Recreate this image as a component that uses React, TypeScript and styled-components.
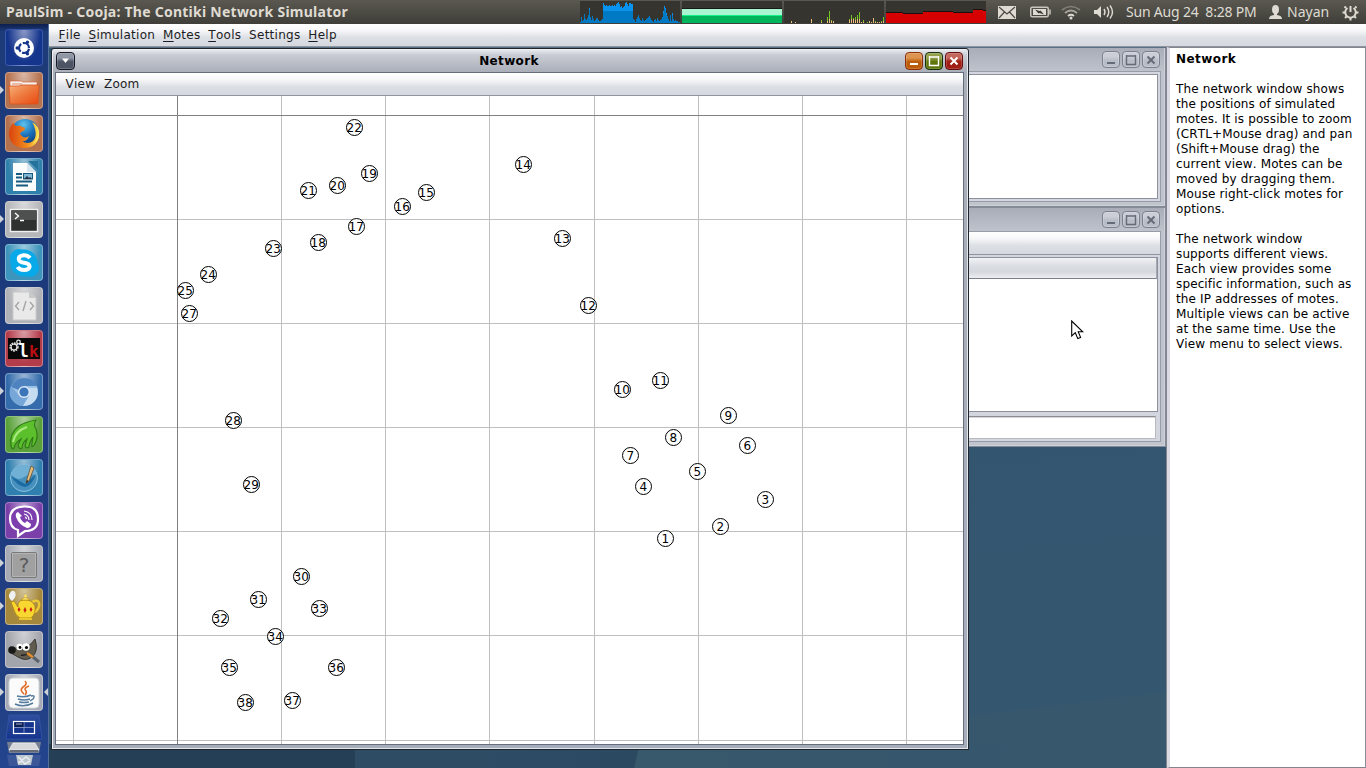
import React from "react";
import styled, { createGlobalStyle, css } from "styled-components";

const Global = createGlobalStyle`
  * { box-sizing: border-box; }
  html, body { margin: 0; padding: 0; }
  body { overflow: hidden; font-family: "DejaVu Sans", sans-serif; font-size: 12px; color: #000; }
  svg { display: block; }
`;

const Screen = styled.div`
  width: 1366px;
  height: 768px;
  display: flex;
  flex-direction: column;
  overflow: hidden;
`;

/* ---------- top panel ---------- */
const Panel = styled.header`
  height: 24px;
  flex: none;
  display: flex;
  align-items: center;
  background: linear-gradient(#5a5850, #3f3e39);
  color: #dfdbd2;
  font-family: "Noto Sans", "Open Sans", sans-serif;
  font-size: 14px;
  white-space: nowrap;
`;
const PanelTitle = styled.div`
  width: 580px;
  padding-left: 6px;
  font-weight: bold;
  font-size: 14px;
  line-height: 18px;
  padding-bottom: 1px;
  letter-spacing: 0.25px;
`;
const Graphs = styled.div`
  display: flex;
  gap: 2px;
  height: 24px;
  width: 406px;
`;
const PanelIcon = styled.div<{ $w: number; $ml: number }>`
  flex: none;
  width: ${(p) => p.$w}px;
  margin-left: ${(p) => p.$ml}px;
`;
const PanelText = styled.div<{ $w: number; $ml: number; $ls?: number }>`
  flex: none;
  width: ${(p) => p.$w}px;
  margin-left: ${(p) => p.$ml}px;
  line-height: 18px;
  padding-bottom: 1px;
  letter-spacing: ${(p) => p.$ls ?? 0}px;
`;

/* ---------- launcher ---------- */
const Body = styled.div`
  flex: 1;
  display: flex;
  min-height: 0;
`;
const Launcher = styled.nav`
  width: 49px;
  flex: none;
  display: flex;
  flex-direction: column;
  gap: 6px;
  padding: 5px 0 0 5px;
  background: linear-gradient(#0d1f4c 0, #1d3a79 7px, #1c3a7c 50%, #213f83 90%, #23458f);
  border-right: 1px solid #50709b;
`;
const Slot = styled.div`
  position: relative;
  width: 38px;
  height: 37px;
  flex: none;
`;
const Tile = styled.div<{ $c: string; $flat?: boolean }>`
  width: 38px;
  height: 37px;
  border-radius: 4px;
  border: 1px solid ${(p) => (p.$flat ? "rgba(120,150,230,.35)" : "rgba(255,255,255,.33)")};
  background: radial-gradient(ellipse at 50% 0, rgba(255, 255, 255, 0.5), rgba(255, 255, 255, 0) 65%), ${(p) => p.$c};
  overflow: hidden;
  svg { margin: -1px 0 0 -1px; }
`;
const Pip = styled.i<{ $right?: boolean }>`
  position: absolute;
  top: 14px;
  border: 4.5px solid transparent;
  ${(p) => p.$right
    ? css`right: -5px; border-left-width: 0; border-right-color: #cdd1d8;`
    : css`left: -5px; border-right-width: 0; border-left-color: #cdd1d8;`}
`;
const Folded = styled.div`
  width: 38px;
  height: 58px;
  margin-top: -3px;
`;

/* ---------- application ---------- */
const Workspace = styled.main`
  flex: 1;
  display: flex;
  flex-direction: column;
  min-width: 0;
  font-kerning: none;
`;
const MenuBar = styled.div<{ $h: number; $pl: number; $gap: number; $pb?: number }>`
  height: ${(p) => p.$h}px;
  flex: none;
  display: flex;
  align-items: center;
  gap: ${(p) => p.$gap}px;
  padding: 0 0 ${(p) => p.$pb ?? 0}px ${(p) => p.$pl}px;
  background: linear-gradient(#fff 0, #f7f7f9 30%, #dcdfe4 62%, #d5d8df);
  border-bottom: 1px solid #8f959f;
  color: #1c1c24;
  white-space: nowrap;
`;
const MenuItem = styled.span`
  line-height: 16px;
  font-size: 12px;
  letter-spacing: 0.28px;
  u { text-underline-offset: 2px; text-decoration-thickness: 1px; text-decoration-skip-ink: none; }
`;
const Row = styled.div`
  flex: 1;
  display: flex;
  min-height: 0;
`;
const Desktop = styled.div`
  position: relative;
  width: 1118px;
  flex: none;
  overflow: hidden;
  background:
    linear-gradient(90deg, #243f56 0 306px, transparent 306px) 0 100% / 100% 24px no-repeat,
    linear-gradient(102deg, #2e4d65 0 400px, #2c4962 577px, #38586b 578px, #35566d 920px, transparent 940px) 0 100% / 100% 24px no-repeat,
    linear-gradient(173deg, transparent 91%, rgba(56, 88, 107, 0.5) 91.2%),
    linear-gradient(175deg, #325571 50%, #35566f 75%),
    #325571;
  border-top: 1px solid #5c7084;
`;
const Win = styled.section<{ $x: number; $y: number; $w: number; $h: number; $active?: boolean }>`
  position: absolute;
  left: ${(p) => p.$x}px;
  top: ${(p) => p.$y}px;
  width: ${(p) => p.$w}px;
  height: ${(p) => p.$h}px;
  display: flex;
  flex-direction: column;
  ${(p) => p.$active
    ? css`
      padding: 0 4px 4px 3px;
      border: 1px solid #20242b;
      border-radius: 3px 3px 0 0;
      background: linear-gradient(#eceef1 0, #c9ccd4 6px, #a9aeb9 23px, #a7aebb);
      box-shadow: inset 1px 1px 0 #eef0f4, inset -1px -1px 0 #e2e5ea;
    `
    : css`
      padding: 0 4px 4px;
      border: 1px solid #858a97;
      border-width: 1px 1px 1px 0;
      background: linear-gradient(#a9adb7 0, #bfc3cc 24px, #c0c4cd);
      box-shadow: inset -1px -1px 0 #cdd0d8;
    `}
`;
const TitleBar = styled.div<{ $h: number; $pt: number }>`
  height: ${(p) => p.$h}px;
  flex: none;
  display: flex;
  align-items: flex-start;
  gap: 2px;
  padding: ${(p) => p.$pt}px 1px 0;
`;
const TitleText = styled.div`
  flex: 1;
  text-align: center;
  font-weight: bold;
  font-size: 12px;
  letter-spacing: 0.35px;
  line-height: 18px;
  padding-left: 38px;
`;
const Spacer = styled.div`
  flex: 1;
`;
const tones = {
  min: ["#dc9450", "#bd5c08", "#8d2d0a"],
  max: ["#93a04b", "#5e7509", "#17300b"],
  close: ["#c4675c", "#a01d14", "#640b0e"],
  menu: ["#8f96a4", "#4d5565", "#161a26"],
  off: ["#cbced6", "#b9bdc7", "#7b818e"],
};
const WinButton = styled.button<{ $tone: keyof typeof tones }>`
  width: ${(p) => (p.$tone === "menu" ? 19 : 18)}px;
  height: ${(p) => (p.$tone === "off" ? 17 : 18)}px;
  flex: none;
  padding: 0;
  border-radius: 4px;
  border: 1px solid ${(p) => tones[p.$tone][2]};
  background: linear-gradient(${(p) => tones[p.$tone][0]} 0, ${(p) => tones[p.$tone][0]} 30%, ${(p) => tones[p.$tone][1]} 55%, ${(p) => tones[p.$tone][1]});
  box-shadow: inset 0 0 0 1px rgba(255, 255, 255, 0.18);
`;
const Frame = styled.div<{ $dark?: boolean }>`
  flex: 1;
  min-height: 0;
  display: flex;
  flex-direction: column;
  background: ${(p) => (p.$dark ? "#fff" : "#d3d6de")};
  border: 1px solid ${(p) => (p.$dark ? "#666e7b" : "#979ca8")};
  ${(p) => !p.$dark && css`border-left: 0;`}
`;
const Pane = styled.div<{ $h?: number; $m: string }>`
  ${(p) => (p.$h ? css`height: ${p.$h}px; flex: none;` : css`flex: 1;`)}
  margin: ${(p) => p.$m};
  background: #fff;
  border: 1px solid #8b909c;
  border-left: 0;
`;
const Field = styled(Pane)`
  border-color: #8b8d92 #b8babd #b8babd;
  box-shadow: inset 0 1px 0 #d5d6d8;
`;
const TableHead = styled.div`
  height: 21px;
  background: linear-gradient(#f2f3f5, #dadde2 40%, #d5d8de 70%, #eceef1);
  border-bottom: 1px solid #7b808b;
  border-right: 1px solid #a5a9b2;
`;
const Help = styled.aside`
  flex: 1;
  padding: 4px 0 0 6px;
  border-top: 1px solid #82858d;
  border-left: 3px solid #d9dae2;
  border-right: 1px solid #8a8e98;
  border-bottom: 1px solid #82858d;
  box-shadow: -1px 0 0 #82858d;
  background: #fff;
  font-size: 12px;
  letter-spacing: 0.13px;
  line-height: 15px;
  white-space: pre;
  z-index: 1;
`;
const Strong = styled.div`
  font-weight: bold;
  letter-spacing: 0.45px;
  margin-bottom: 15px;
`;
const Para = styled.div`
  margin-bottom: 15px;
`;
const Pointer = styled.svg`
  position: absolute;
  left: 1022px;
  top: 272px;
`;

const motes: [number, number, number][] = [
  [1, 665, 538], [2, 720, 526], [3, 765, 499], [4, 643, 486], [5, 697, 471], [6, 747, 445],
  [7, 630, 455], [8, 673, 437], [9, 728, 415], [10, 622, 389], [11, 660, 380], [12, 588, 305],
  [13, 562, 238], [14, 523, 164], [15, 426, 192], [16, 402, 206], [17, 356, 226], [18, 318, 242],
  [19, 369, 173], [20, 337, 185], [21, 308, 190], [22, 354, 127], [23, 273, 248], [24, 208, 274],
  [25, 185, 290], [27, 189, 313], [28, 233, 420], [29, 251, 484], [30, 301, 576], [31, 258, 599],
  [32, 220, 618], [33, 319, 608], [34, 275, 636], [35, 229, 667], [36, 336, 667], [37, 292, 700],
  [38, 245, 702],
];
const vLines = [73, 281, 385, 489, 594, 698, 802, 906];
const hLines = [219, 323, 427, 531, 635, 740];

const NetworkMap = () => (
  <svg width="907" height="648" viewBox="56 96 907 648">
    <g shapeRendering="crispEdges" fill="#bfbfbf">
      {vLines.map((x) => <rect key={x} x={x} y="96" width="1" height="648" />)}
      {hLines.map((y) => <rect key={y} x="56" y={y} width="907" height="1" />)}
      <rect x="177" y="96" width="1" height="648" fill="#808080" />
      <rect x="56" y="115" width="907" height="1" fill="#808080" />
    </g>
    {motes.map(([id, x, y]) => (
      <g key={id}>
        <circle cx={x + 0.5} cy={y + 0.5} r="8" fill="#fff" stroke="#000" />
        <text x={x + 0.3} y={y + 5} fontSize="12" letterSpacing=".2" textAnchor="middle" fontFamily="DejaVu Sans">{id}</text>
      </g>
    ))}
  </svg>
);

const cpu = [1,6,2,3,9,4,3,5,8,15,6,3,7,4,2,3,5,5,3,2,2,3,4,20,18,17,18,17,17,18,17,17,18,17,18,17,19,20,21,19,16,17,15,16,17,20,21,19,17,20,20,19,19,4,3,1,4,6,8,5,3,2,5,3,2,3,4,5,6,7,5,3,2,1,3,4,2,5,3,2,3,4,6,12,17,15,10,7,4,2,8,2,10,4,2,3,2,2,1,1];
const net: [number, number, number][] = [[7,2,0],[11,1,0],[27,4,0],[37,3,2],[43,6,4],[45,12,8],[47,3,1],[49,2,0],[65,4,1],[67,8,4],[69,5,1],[71,6,3],[73,8,4],[75,11,7],[77,1,0],[79,3,2],[83,1,1],[85,2,0],[87,1,0],[89,5,0],[91,2,1],[93,1,0],[95,1,0],[97,2,1],[99,6,4]];

const LoadGraphs = () => (
  <Graphs>
    <svg width="100" height="24" shapeRendering="crispEdges">
      <rect width="100" height="22" y="1" fill="#35342f" />
      {cpu.map((v, i) => <rect key={i} x={i} y={23 - v} width="1" height={v} fill="#0079c5" />)}
      {cpu.map((v, i) => v > 9 && <rect key={i} x={i} y={23 - v} width="1" height={i > 22 && i < 54 ? v - 12 : 2} fill="#0a93ee" />)}
    </svg>
    <svg width="100" height="24" shapeRendering="crispEdges">
      <rect width="100" height="22" y="1" fill="#35342f" />
      <rect y="8" width="100" height="1" fill="#151a17" />
      <rect y="9" width="100" height="6" fill="#a9f5d1" />
      <rect y="15" width="100" height="1" fill="#12f08a" />
      <rect y="16" width="100" height="7" fill="#00b45c" />
    </svg>
    <svg width="100" height="24" shapeRendering="crispEdges">
      <rect width="100" height="22" y="1" fill="#35342f" />
      {net.map(([x, h, g]) => (
        <g key={x}>
          <rect x={x} y={23 - h} width="1" height={h} fill="#edbd7e" />
          <rect x={x} y={23 - h} width="1" height={g} fill="#73c51f" />
        </g>
      ))}
    </svg>
    <svg width="100" height="24" shapeRendering="crispEdges">
      <rect width="100" height="22" y="1" fill="#35342f" />
      <path d="M0 12H17V13H37V11H67V12H87V9H97V10H100V23H0Z" fill="#1c0f0d" />
      <path d="M0 13H17V14H37V12H67V13H87V10H97V11H100V23H0Z" fill="#d60000" />
    </svg>
  </Graphs>
);

const L = ({ children }: { children: React.ReactNode }) => (
  <svg width="38" height="37" viewBox="0 0 38 37">{children}</svg>
);

const icons: { name: string; c: string; flat?: boolean; left?: boolean; right?: boolean; art: React.ReactNode }[] = [
  { name: "dash", c: "#15348c", flat: true, art: <L>
    <circle cx="19" cy="19" r="10" fill="#fff" />
    <circle cx="19" cy="19" r="5" fill="none" stroke="#15348c" strokeWidth="2.2" strokeDasharray="8.8 1.67" strokeDashoffset="-0.8" />
    <circle cx="12.2" cy="19" r="1.7" fill="#15348c" /><circle cx="22.4" cy="13.2" r="1.7" fill="#15348c" /><circle cx="22.4" cy="24.8" r="1.7" fill="#15348c" /></L> },
  { name: "files", c: "#b5724f", left: true, art: <L>
    <defs><linearGradient id="fo" x2="1" y2="1"><stop stopColor="#f7b07a" /><stop offset=".45" stopColor="#ee7d42" /><stop offset="1" stopColor="#e9480f" /></linearGradient></defs>
    <path d="M5 11V9H16L18 10H32V16H5Z" fill="#f3f0ed" stroke="#d95c2e" strokeWidth=".6" /><path d="M7 12H17" stroke="#e8835c" />
    <path d="M4 14H14L17 13H34L33 31Q33 32 32 32H6Q5 32 5 31Z" fill="url(#fo)" stroke="#d9501c" strokeWidth=".8" /></L> },
  { name: "firefox", c: "#b4714d", art: <L>
    <defs><radialGradient id="gl" cx=".45" cy=".2" r=".8"><stop stopColor="#5cc3ee" /><stop offset=".5" stopColor="#1a6fb8" /><stop offset="1" stopColor="#0b2f72" /></radialGradient>
      <linearGradient id="fx" x2="1"><stop stopColor="#d9430e" /><stop offset=".6" stopColor="#f28c1d" /><stop offset="1" stopColor="#fbe04a" /></linearGradient></defs>
    <circle cx="20" cy="18" r="14" fill="url(#gl)" />
    <path d="M8 8L11 11Q15 10 17 12Q20 12 20 14Q19 16 16 17Q14 19 17 21Q20 24 24 21Q22 27 17 26Q23 30 28 26Q32 22 30 14Q29 10 27 7Q35 11 34 21Q32 33 19 33Q5 32 4 19Q4 13 8 8Z" fill="url(#fx)" />
    <path d="M28 8Q35 14 32 22Q30 28 26 30Q34 27 34 19Q34 11 28 8Z" fill="#ffe862" /></L> },
  { name: "writer", c: "#2f80ab", art: <L>
    <path d="M23 3H33V12Z" fill="#23739c" /><path d="M8 5H22L31 14V33H8Z" fill="#fbfcfc" /><path d="M22 5L31 14H22Z" fill="#d8e7ef" />
    <path d="M11 16H17M11 19.5H17M11 23.5H27M11 27.5H23" stroke="#175a80" strokeWidth="2" /><rect x="18.5" y="15.5" width="9" height="5.5" fill="#7fb8d5" stroke="#175a80" /><path d="M19 21L22 18L24 20L25 19L27 21Z" fill="#234" /></L> },
  { name: "terminal", c: "#b5b6ba", left: true, art: <L>
    <rect x="5.5" y="8.5" width="27" height="22" fill="#2f3130" stroke="#f1f1f1" strokeWidth="1.4" /><rect x="7" y="10" width="24" height="9" fill="#4d504e" /><path d="M10 12L13.5 15L10 18M15 19.5H19" fill="none" stroke="#fff" strokeWidth="1.3" /></L> },
  { name: "skype", c: "#3d94bc", art: <L>
    <circle cx="14" cy="14" r="9" fill="#08a9e8" /><circle cx="25" cy="24" r="9" fill="#08a9e8" /><circle cx="19" cy="19" r="13.5" fill="#08a9e8" />
    <path d="M25 14Q22.500 10.800 18.500 11.300Q13.500 12 13.800 15.200Q14.200 18 19 18.800Q24.800 19.800 24.600 22.700Q24 26 19 26Q14.500 26 12.500 23" fill="none" stroke="#fff" strokeWidth="4" /></L> },
  { name: "editor", c: "#b1b2b8", art: <L>
    <path d="M8 5H24L31 11V33H8Z" fill="#e9e9e9" stroke="#c9c9c9" /><path d="M24 5V11H31Z" fill="#c9c9c9" />
    <path d="M14 15L10.500 19L14 23M25 15L28.500 19L25 23M21 14L18 24" fill="none" stroke="#a5a5a5" strokeWidth="1.400" /></L> },
  { name: "luckybackup", c: "#b33c4b", art: <L>
    <rect x="3" y="8" width="32" height="21" fill="#080808" /><circle cx="9" cy="17" r="3.500" fill="none" stroke="#ddd" strokeWidth="2.400" strokeDasharray="1.600 .7" /><circle cx="9" cy="17" r="3" fill="none" stroke="#ddd" /><circle cx="13.500" cy="12" r="1.800" fill="none" stroke="#ddd" strokeWidth="1.300" />
    <text x="13.5" y="27" fontFamily="DejaVu Sans Mono" fontSize="17" fontWeight="bold" fill="#fff">l</text><text x="24" y="27" fontFamily="DejaVu Sans Mono" fontSize="16" fontWeight="bold" fill="#bd0d13">k</text></L> },
  { name: "chromium", c: "#356dac", left: true, art: <L>
    <circle cx="19" cy="19" r="14" fill="#9cc1e6" /><path d="M19 19L6 14Q10 5 19 5Q29 5 32 13H19Z" fill="#4e83bf" /><path d="M13.500 22L6 13Q2 23 9 29Q13 33 18 33L23 24Z" fill="#77a7d8" /><path d="M24 15H32Q35 27 24 32L18 33L24 23Z" fill="#c6dcf1" /><circle cx="19" cy="19" r="6" fill="#d9e8f6" /><circle cx="19" cy="19" r="4.600" fill="#3d76b8" /></L> },
  { name: "leaf", c: "#5aa13a", art: <L>
    <path d="M6 30Q4 17 14 10Q20 6 31 4Q28 9 31 13Q34 22 29 29Q26 33 27 27L28 21Q24 27 24 31Q21 33 20 30L22 23Q17 27 17 32Q14 34 13 29L16 23Q10 27 9 32Q7 34 6 30Z" fill="#5cc02d" stroke="#2f7c16" strokeWidth="1.200" /><path d="M8 26Q10 15 22 11" stroke="#a9e97f" strokeWidth="2" fill="none" /></L> },
  { name: "scribble", c: "#2f7faf", art: <L>
    <circle cx="19" cy="19" r="13.500" fill="#4790be" stroke="#8ec2de" /><path d="M6 15Q12 23 19 18Q26 13 32 17Q32 8 19 6Q8 7 6 15Z" fill="#6fb0d4" /><path d="M6 17L20 25L31 15Q27 27 20 28Q12 27 6 17Z" fill="#1b6ba2" />
    <path d="M26 7L29 9L24 22L21 24L22 20Z" fill="#e7bd7b" stroke="#5f4c35" strokeWidth=".8" /><path d="M21 24L22 21L23.500 22Z" fill="#222" /></L> },
  { name: "viber", c: "#7a3fa8", art: <L>
    <path d="M19 4.500Q33 4 33 17Q33 29 20 29L13 34V28Q5 26 5 16.500Q5 5 19 4.500Z" fill="#7d3fae" stroke="#fff" strokeWidth="2.200" />
    <path d="M13 10Q10 11 11 15Q14 23 22 26Q26 26 26 22L22 19L20 21Q16 19 15 15L17 14Z" fill="#fff" /><path d="M19 12Q24 13 24 18M19 9Q27 10 27 18M20 15Q21 15 21.500 17" fill="none" stroke="#fff" strokeWidth="1.200" /></L> },
  { name: "unknown", c: "#a8abb4", left: true, art: <L>
    <rect x="6.500" y="7.500" width="25" height="25" rx="1.500" fill="#a0a0a0" stroke="#787878" /><rect x="7.500" y="8.500" width="23" height="23" fill="none" stroke="#bbb" strokeWidth=".7" /><text x="19" y="27" textAnchor="middle" fontFamily="DejaVu Sans" fontSize="20" fill="#5c5c5c">?</text></L> },
  { name: "teapot", c: "#a5883b", left: true, art: <L>
    <path d="M7 13Q2 9 5 5Q7 1 10 4Q12 8 8 12Z" fill="#eef0f2" /><path d="M27 14Q35 10 34 18Q33 24 26 25" fill="none" stroke="#edc936" strokeWidth="2.500" />
    <path d="M6 14L9 13L13 19Q12 13 18 12Q27 11 30 18Q31 26 26 30H15Q10 27 9 22Z" fill="#f7d730" stroke="#af7e12" strokeWidth=".8" /><path d="M16 12Q20 7 25 12Z" fill="#ffe871" stroke="#b98c17" strokeWidth=".7" /><circle cx="20.500" cy="8" r="1.500" fill="#f9e05b" />
    <path d="M14 19L15.500 21.500L14 24L12.500 21.500ZM20 19L21.500 22L20 25L18.500 22ZM26 19L27.500 21.500L26 24L24.500 21.500Z" fill="#cd2418" /><path d="M14 31H27" stroke="#ecc630" strokeWidth="2" /></L> },
  { name: "gimp", c: "#a3a5ac", art: <L>
    <path d="M6 18Q12 18 13 14L16 17Q24 17 30 8Q34 20 27 26Q21 31 13 26L6 22Z" fill="#615c50" stroke="#37352f" /><circle cx="7" cy="19" r="3.800" fill="#181818" /><circle cx="14.500" cy="16" r="3.200" fill="#fff" /><circle cx="21" cy="16" r="3.700" fill="#fff" /><circle cx="15" cy="16.500" r="1.400" /><circle cx="21.500" cy="16.500" r="1.600" />
    <path d="M16 24Q20 25 24 22" stroke="#222" fill="none" strokeWidth="1.500" /><path d="M22 22L29 27" stroke="#e88e26" strokeWidth="2.200" /><path d="M28 26L34 31" stroke="#59616b" strokeWidth="3" /></L> },
  { name: "java", c: "#a5aab6", left: true, right: true, art: <L>
    <rect x="4" y="4" width="30" height="30" rx="4" fill="#fbfbfb" stroke="#d3d5d8" /><path d="M20 7Q23 10 18 13Q14 16 19 20M24 12Q18 14 21 17Q22 19 20 21" fill="none" stroke="#e46e2b" strokeWidth="1.700" />
    <path d="M12 22Q19 24 26 21M13 25Q19 27 25 25M14 28Q19 29 24 28M10 30Q19 34 28 29M26 22Q31 21 28 25L25 27" fill="none" stroke="#557b9c" strokeWidth="1.500" /></L> },
];

const FoldedIcons = () => (
  <svg width="38" height="58">
    <defs><linearGradient id="fd" x2="0" y2="1"><stop stopColor="#2f4e9d" /><stop offset="1" stopColor="#16348d" /></linearGradient></defs>
    <path d="M4 1H34L37 25H1Z" fill="url(#fd)" stroke="#3859a8" strokeWidth=".7" />
    <rect x="8.500" y="7.500" width="21" height="12" fill="#16348d" stroke="#fff" strokeWidth="1.200" /><path d="M19 8V19M9 13.500H29" stroke="#93a2cc" strokeWidth=".8" /><rect x="9.500" y="8.500" width="9" height="4.500" fill="#0d1f50" /><path d="M11 10H17" stroke="#cbd3ea" strokeWidth=".8" />
    <path d="M2 28H36L34 39H4Z" fill="#777f93" /><path d="M8 29H30L34 36H4Z" fill="#d5d7da" stroke="#f4f4f4" strokeWidth=".7" /><path d="M5 37H33" stroke="#646a78" strokeWidth="2" />
    <path d="M2 41H36L34 52H4Z" fill="#3b5797" /><path d="M11 41H28L26 51H13Z" fill="#bcc6ce" /><path d="M13 43L17 46L21 43L25 46M13 49L17 47L20 50L25 47" stroke="#e9edef" strokeWidth="1.500" fill="none" />
  </svg>
);

const Glyph = ({ kind, color }: { kind: "min" | "max" | "close" | "menu"; color: string }) => (
  <svg width="16" height="16" viewBox="0 0 16 16" fill="none" stroke={color} strokeWidth="2">
    {kind === "min" && <path d="M4 11H12" />}
    {kind === "max" && <path d="M3 4H13M3.500 3V12.500H12.500V3" strokeWidth="1.400" />}
    {kind === "close" && <path d="M4.500 4.500L11.500 11.500M11.500 4.500L4.500 11.500" />}
    {kind === "menu" && <path d="M5 5.500H12L8.500 10Z" fill={color} stroke="none" />}
  </svg>
);

const DimButtons = () => (
  <>
    {(["min", "max", "close"] as const).map((k) => (
      <WinButton key={k} $tone="off"><Glyph kind={k} color="#656b77" /></WinButton>
    ))}
  </>
);

export default function App() {
  return (
    <Screen>
      <Global />
      <Panel>
        <PanelTitle>PaulSim - Cooja: The Contiki Network Simulator</PanelTitle>
        <LoadGraphs />
        <PanelIcon $w={18} $ml={12}>
          <svg width="18" height="13"><rect width="18" height="13" fill="#dfdbd2" /><path d="M1 1L9 8L17 1M1 12L6.500 6M17 12L11.500 6" fill="none" stroke="#4b4943" strokeWidth="1.200" /></svg>
        </PanelIcon>
        <PanelIcon $w={21} $ml={14}>
          <svg width="21" height="12"><rect x=".75" y="1.250" width="17.500" height="9.500" rx="1.500" fill="none" stroke="#c9c5bd" strokeWidth="1.500" /><rect x="3" y="3" width="13" height="6" fill="#dfdbd2" /><rect x="19" y="3.500" width="2" height="5" fill="#aaa79f" /><path d="M5 3.500L9.500 5L10.500 4.500L14 8.500L9.500 7L8.500 7.500Z" fill="#3a3934" /></svg>
        </PanelIcon>
        <PanelIcon $w={20} $ml={10}>
          <svg width="20" height="16" fill="none" strokeWidth="1.700"><path d="M1 6Q10 -1 19 6" stroke="#817f77" /><path d="M4 9Q10 4 16 9" stroke="#aaa79f" /><path d="M7 12Q10 9.500 13 12" stroke="#dfdbd2" /><circle cx="10" cy="14" r="1.500" fill="#dfdbd2" /></svg>
        </PanelIcon>
        <PanelIcon $w={20} $ml={13}>
          <svg width="20" height="16" fill="none" stroke="#dfdbd2" strokeWidth="1.400"><path d="M0 6H3L7 2V14L3 10H0Z" fill="#dfdbd2" stroke="none" /><path d="M10 5Q12 8 10 11M13 3Q16.500 8 13 13" /><path d="M16 1.500Q21 8 16 14.500" /></svg>
        </PanelIcon>
        <PanelText $w={131} $ml={12} $ls={-0.2}>Sun Aug 24&nbsp; 8:28 PM</PanelText>
        <PanelIcon $w={13} $ml={12}>
          <svg width="13" height="15" fill="#dfdbd2"><ellipse cx="6.500" cy="4.500" rx="3.500" ry="4.500" /><path d="M5 8H8V10Q13 10.500 13 14H0Q0 10.500 5 10Z" /></svg>
        </PanelIcon>
        <PanelText $w={45} $ml={5}>Nayan</PanelText>
        <PanelIcon $w={17} $ml={10}>
          <svg width="17" height="17" fill="none" stroke="#dfdbd2"><path d="M5.500 4A5.300 5.300 0 1 0 11.500 4" strokeWidth="2" /><path d="M8.500 2V8" strokeWidth="2" /><path d="M4 4L2.500 2.500M13 4L14.500 2.500M3 8.500H.5M14 8.500H16.500M4.500 12.500L3 14M12.500 12.500L14 14M8.500 14V16.500" strokeWidth="2" /></svg>
        </PanelIcon>
      </Panel>
      <Body>
        <Launcher>
          {icons.map((i) => (
            <Slot key={i.name}>
              <Tile $c={i.c} $flat={i.flat}>{i.art}</Tile>
              {i.left && <Pip />}
              {i.right && <Pip $right />}
            </Slot>
          ))}
          <Folded><FoldedIcons /></Folded>
        </Launcher>
        <Workspace>
          <MenuBar $h={23} $pl={9.6} $gap={7.8} $pb={1}>
            <MenuItem><u>F</u>ile</MenuItem>
            <MenuItem><u>S</u>imulation</MenuItem>
            <MenuItem><u>M</u>otes</MenuItem>
            <MenuItem><u>T</u>ools</MenuItem>
            <MenuItem>Settings</MenuItem>
            <MenuItem><u>H</u>elp</MenuItem>
          </MenuBar>
          <Row>
            <Desktop>
              <Win $x={401} $y={-1} $w={716} $h={160}>
                <TitleBar $h={23} $pt={3}><Spacer /><DimButtons /></TitleBar>
                <Frame><Pane $m="2px" /></Frame>
              </Win>
              <Win $x={401} $y={159} $w={716} $h={240}>
                <TitleBar $h={23} $pt={3}><Spacer /><DimButtons /></TitleBar>
                <Frame>
                  <MenuBar $h={23} $pl={0} $gap={0} />
                  <Pane $m="2px 2px 0 0"><TableHead /></Pane>
                  <Field $h={23} $m="4px 4px 2px 0" />
                </Frame>
              </Win>
              <Win $x={2} $y={0} $w={918} $h={702} $active>
                <TitleBar $h={23} $pt={3}>
                  <WinButton $tone="menu"><Glyph kind="menu" color="#fff" /></WinButton>
                  <TitleText>Network</TitleText>
                  <WinButton $tone="min"><Glyph kind="min" color="#fff" /></WinButton>
                  <WinButton $tone="max"><Glyph kind="max" color="#fff" /></WinButton>
                  <WinButton $tone="close"><Glyph kind="close" color="#fff" /></WinButton>
                </TitleBar>
                <Frame $dark>
                  <MenuBar $h={23} $pl={9.5} $gap={8.5}>
                    <MenuItem>View</MenuItem>
                    <MenuItem>Zoom</MenuItem>
                  </MenuBar>
                  <NetworkMap />
                </Frame>
              </Win>
              <Pointer width="13" height="20" viewBox="0 0 13 20">
                <path d="M.7 1V16L4.300 12.700L6.800 18.600L9.600 17.400L7.200 11.800H11.800Z" fill="#fff" stroke="#000" strokeWidth="1.100" />
              </Pointer>
            </Desktop>
            <Help>
              <Strong>Network</Strong>
              <Para>{`The network window shows
the positions of simulated
motes. It is possible to zoom
(CRTL+Mouse drag) and pan
(Shift+Mouse drag) the
current view. Motes can be
moved by dragging them.
Mouse right-click motes for
options.`}</Para>
              <Para>{`The network window
supports different views.
Each view provides some
specific information, such as
the IP addresses of motes.
Multiple views can be active
at the same time. Use the
View menu to select views.`}</Para>
            </Help>
          </Row>
        </Workspace>
      </Body>
    </Screen>
  );
}
